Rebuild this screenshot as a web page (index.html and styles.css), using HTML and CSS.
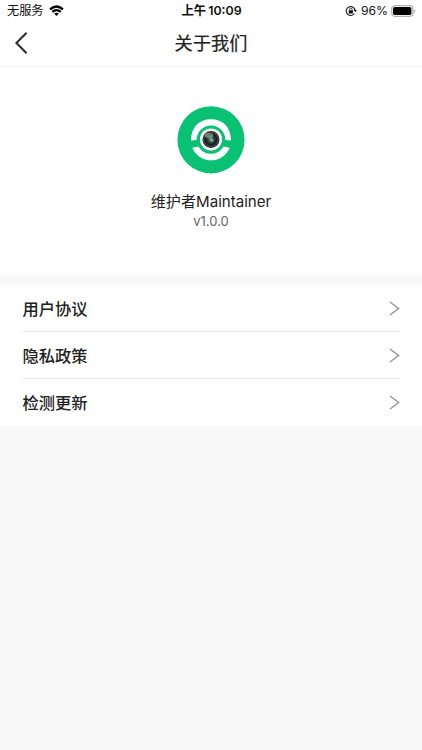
FILE: index.html
```html
<!DOCTYPE html>
<html lang="zh-CN">
<head>
<meta charset="utf-8">
<title>关于我们</title>
<link rel="stylesheet" href="styles.css">
</head>
<body>
<header class="top">
  <div class="status">
    <div class="status-left"><span class="carrier">无服务</span>
      <svg class="wifi" width="15" height="11" viewBox="0 0 16 12" fill="none" stroke="#000" stroke-width="2.5"><path d="M1 4.7Q8-1.5 15 4.7"/><path d="M3.4 7.6Q8 3.6 12.6 7.6"/><path d="M8 12 5.4 9.4Q8 7.4 10.6 9.4Z" fill="#000" stroke="none"/></svg>
    </div>
    <div class="clock"><span>上午</span><span class="time">10:09</span></div>
    <div class="status-right">
      <svg class="lock" width="12" height="12" viewBox="0 0 12 12" fill="none" stroke="#111"><path d="M9.4 8.5A4.5 4.5 0 1 1 10.1 5.2" stroke-width="1.1"/><path d="M8.6 5.1h3.2L10.3 7.3z" fill="#111" stroke="none"/><rect x="3.7" y="5.3" width="4.2" height="3.2" fill="#111" stroke="none"/><path d="M4.6 5.4V4.3a1.2 1.2 0 0 1 2.4 0v1.1" stroke-width=".8"/></svg>
      <span class="percent">96%</span>
      <svg class="battery" width="25" height="12" viewBox="0 0 25 12"><rect x=".7" y=".7" width="21.2" height="10.6" rx="3.2" fill="#fff" stroke="#b0b0b0" stroke-width="1.3"/><rect x="2" y="2" width="18.4" height="8" rx="1.8"/><path d="M23.1 4.2v3.6q1.3-.6 1.3-1.8t-1.3-1.8" fill="#aaa"/></svg>
    </div>
  </div>
  <nav class="nav">
    <svg class="back" width="14" height="24" viewBox="0 0 14 24" fill="none" stroke="#2c2c2c" stroke-width="2"><path d="M12.6 1.7 2.4 12l10.2 10.3"/></svg>
    <h1>关于我们</h1>
  </nav>
</header>
<section class="about">
  <svg class="logo" width="68" height="68" viewBox="0 0 68 68">
    <defs><radialGradient id="lens"><stop offset="0" stop-color="#8fae9a"/><stop offset=".3" stop-color="#345744"/><stop offset=".65" stop-color="#151d1a"/><stop offset=".85" stop-color="#444"/><stop offset="1" stop-color="#222"/></radialGradient></defs>
    <circle cx="34" cy="33.8" r="33.6" fill="#08c172"/>
    <path d="M14 34.6C14 21 22 13.2 34 13.2S54 21 54 34.6l-5.6-.6a14.4 14.6 0 0 0-28.8 0z" fill="#fff"/>
    <path d="M15.2 41.8l6.2-1.2a14.6 14.6 0 0 0 25.2 0l6.2 1.2a20.4 20.4 0 0 1-37.6 0z" fill="#fff"/>
    <circle cx="34" cy="33.4" r="11" fill="#fff"/>
    <circle cx="34" cy="33.4" r="8.5" fill="url(#lens)"/>
    <ellipse cx="32" cy="29.4" rx="4.2" ry="2.5" fill="#adc4b5" opacity=".55"/>
    <circle cx="35" cy="34.4" r="1.3" fill="#8eb1d0" opacity=".8"/>
  </svg>
  <div class="name">维护者Maintainer</div>
  <div class="version">v1.0.0</div>
</section>
<main class="list">
  <a class="row"><span>用户协议</span><svg width="11" height="15" viewBox="0 0 11 15"><path d="M1 1l8.6 6.5L1 14"/></svg></a>
  <a class="row"><span>隐私政策</span><svg width="11" height="15" viewBox="0 0 11 15"><path d="M1 1l8.6 6.5L1 14"/></svg></a>
  <a class="row"><span>检测更新</span><svg width="11" height="15" viewBox="0 0 11 15"><path d="M1 1l8.6 6.5L1 14"/></svg></a>
</main>
</body>
</html>
```
FILE: styles.css
```css
* { box-sizing: border-box; }
body { margin: 0; height: 750px; background: #f8f8f8; color: #222; font-family: Inter, "Noto Sans CJK SC", sans-serif; overflow: hidden; }
.top { height: 67px; background: #fff; border-bottom: 1px solid #f5f5f5; }
.status { height: 22px; display: grid; grid-template-columns: 1fr auto 1fr; grid-template-rows: 22px; align-items: center; padding: 0 6px 0 7px; color: #111; font-size: 12.2px; line-height: 20px; }
.status-left, .status-right, .clock { display: flex; align-items: center; white-space: nowrap; }
.status-right { height: 21px; align-self: start; }
.status-left { height: 21px; align-self: start; }
.carrier { padding-top: 1px; }
.wifi { margin-left: 5px; }
.clock { height: 22px; gap: 2px; font-weight: 600; font-size: 12.4px; }
.status-right { justify-content: flex-end; }
.lock { margin-right: -1px; }
.percent { margin: 0 3px 0 5px; }
.nav { height: 44px; display: grid; grid-template-columns: 40px 1fr 40px; align-items: center; }
.back { margin: -2px 0 0 14px; }
h1 { margin: -2px 0 0; text-align: center; font-size: 18.2px; line-height: 26px; font-weight: 400; -webkit-text-stroke: .2px; }
.about { height: 208px; background: #fff; padding-top: 39px; display: flex; flex-direction: column; align-items: center; }
.logo { display: block; }
.name { margin-top: 16px; font-size: 15.1px; line-height: 24px; }
.version { font-size: 13px; line-height: 16px; color: #666; margin-top: -1px; }
.list { margin-top: 10px; height: 141px; padding: 0 22.5px; background: #fff; }
.row { height: 47px; display: flex; align-items: center; justify-content: space-between; border-bottom: 1px solid #e7e7e7; font-size: 16.3px; line-height: 24px; font-weight: 500; }
.row span { padding-top: 2px; }
.row:last-child { border-bottom-color: transparent; }
.row path { fill: none; stroke: #999; stroke-width: 1.5; }
```
